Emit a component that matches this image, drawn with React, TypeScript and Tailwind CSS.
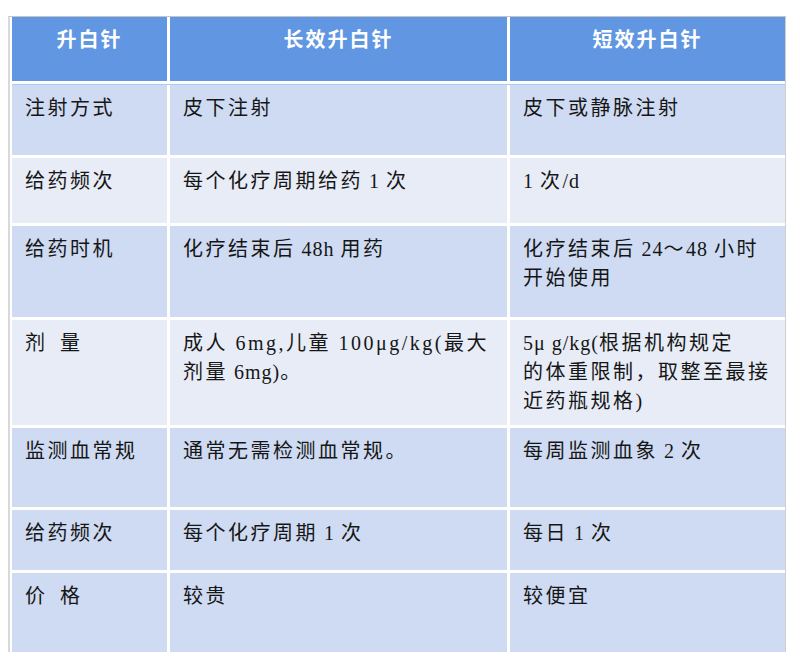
const font = "font-['Liberation_Serif','Noto_Sans_CJK_SC',serif]";

// latin runs sit tighter than the CJK glyphs
function L({ children }: { children: React.ReactNode }) {
  return <span className="tracking-[1px]">{children}</span>;
}

type Row = { h: string; bg: string; cells: React.ReactNode[] };

const rows: Row[] = [
  { h: "h-[71px]", bg: "bg-[#cfdbf2]", cells: ["注射方式", "皮下注射", "皮下或静脉注射"] },
  {
    h: "h-[65px]",
    bg: "bg-[#e7ecf7]",
    cells: [
      "给药频次",
      <>
        每个化疗周期给药<L> 1 </L>次
      </>,
      <>
        <L>1 </L>次<L>/d</L>
      </>,
    ],
  },
  {
    h: "h-[91px]",
    bg: "bg-[#cfdbf2]",
    cells: [
      "给药时机",
      <>
        化疗结束后<L> 48h </L>用药
      </>,
      <>
        化疗结束后<L> 24</L>～<L>48 </L>小时
        <br />
        开始使用
      </>,
    ],
  },
  {
    h: "h-[105px]",
    bg: "bg-[#e7ecf7]",
    cells: [
      "剂\u2002量",
      <>
        成人 6mg,儿童 100μg/kg(最大
        <br />
        剂量<L> 6mg)</L>。
      </>,
      <>
        <L>5μ g/kg(</L>根据机构规定
        <br />
        的体重限制，取整至最接
        <br />
        近药瓶规格<L>)</L>
      </>,
    ],
  },
  {
    h: "h-[79px]",
    bg: "bg-[#cfdbf2]",
    cells: [
      "监测血常规",
      "通常无需检测血常规。",
      <>
        每周监测血象<L> 2 </L>次
      </>,
    ],
  },
  {
    h: "h-[60px]",
    bg: "bg-[#cfdbf2]",
    cells: [
      "给药频次",
      <>
        每个化疗周期<L> 1 </L>次
      </>,
      <>
        每日<L> 1 </L>次
      </>,
    ],
  },
  { h: "h-[79px]", bg: "bg-[#cfdbf2]", cells: ["价\u2002格", "较贵", "较便宜"] },
];

export default function App() {
  return (
    <div className={`min-h-[664px] bg-white ${font}`}>
      <div className="ml-[8px] mt-[16px] w-[778px] border-l-2 border-solid border-l-[#d9d9d9] border-t border-t-[#c4c4c4] border-r border-r-[#cfcfcf] border-dotted pl-[2px] bg-white">
        <div className="flex flex-col gap-[3px]">
          {/* header */}
          <div className="grid h-[64px] grid-cols-[155px_337px_275px] gap-x-[3px]">
            {["升白针", "长效升白针", "短效升白针"].map((t) => (
              <div
                key={t}
                className="bg-[#6096e2] pt-[9px] text-center text-[20px] font-semibold leading-[29px] tracking-[2px] text-white"
              >
                {t}
              </div>
            ))}
          </div>

          {rows.map((r, i) => (
            <div
              key={i}
              className={`grid ${r.h} grid-cols-[155px_337px_275px] gap-x-[3px] ${i === 0 ? "border-t border-[#b3c8ec]" : ""}`}
            >
              {r.cells.map((c, j) => (
                <div
                  key={j}
                  className={`${r.bg} whitespace-nowrap px-[13px] pt-[9px] text-[20px] leading-[29px] tracking-[2.5px] text-[#161616]`}
                >
                  {c}
                </div>
              ))}
            </div>
          ))}
        </div>
      </div>
    </div>
  );
}
